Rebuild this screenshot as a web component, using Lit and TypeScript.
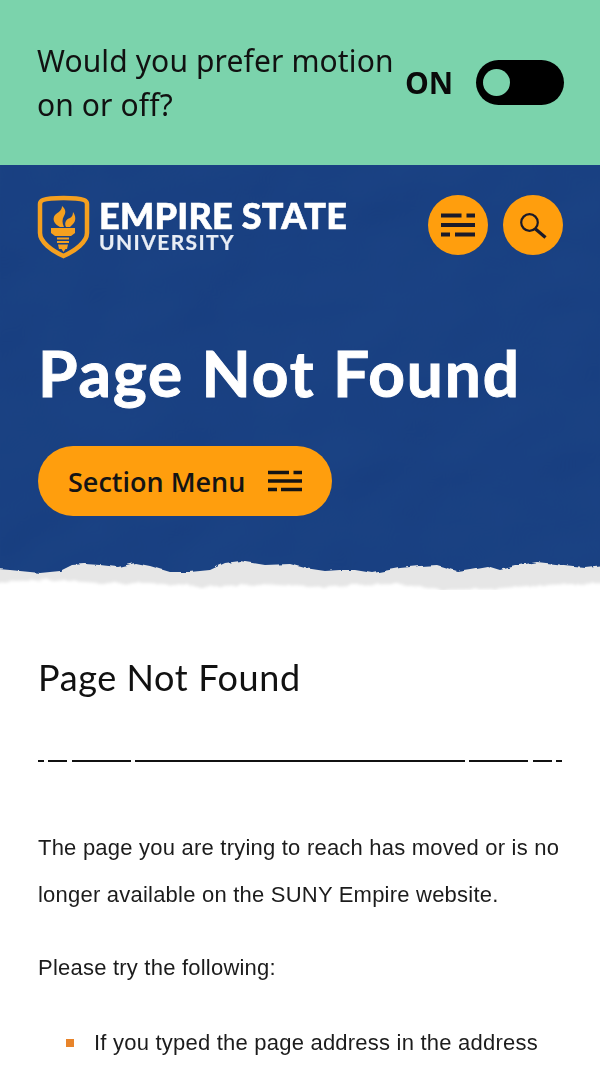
import { LitElement, html, css, svg } from "lit";
import { customElement } from "lit/decorators.js";

const tornTop = "M-12 18 L10 20 L20 21 L40 23 L60 21 L72 15 L85 14 L100 15 L118 17 L135 13 L150 16 L170 22 L190 22 L210 20 L225 13 L240 11 L265 15 L290 14 L305 18 L325 21 L340 20 L355 20 L373 23 L400 18 L420 16 L437 15 L457 21 L470 19 L487 16 L500 20 L520 15 L537 12 L555 14 L573 16 L585 17 L612 14 L612 70 L-12 70 Z";
const tornBottom = "M-12 32 L50 30 L100 33 L150 33 L200 37 L260 34 L310 37 L350 35 L400 34 L440 40 L490 39 L540 35 L612 33 L612 70 L-12 70 Z";

const sliders = () => svg`<svg width="34" height="24" viewBox="0 0 34 24" fill="none" stroke="currentColor" stroke-width="4">
  <path d="M0 2.5H20.5M25.5 2.5H34M0 12H34M0 21.5H9M14 21.5H34"/></svg>`;
const slidersSmall = () => svg`<svg width="34" height="22" viewBox="0 0 34 22" fill="none" stroke="currentColor" stroke-width="3.5">
  <path d="M0 2.5H21M25.5 2.5H34M0 11H34M0 19.5H9M13 19.5H34"/></svg>`;

@customElement("app-root")
export class AppRoot extends LitElement {
  static styles = css`
    :host { display: block; width: 600px; height: 1065px; overflow: hidden; background: #fff; font-family: "Liberation Sans", Arial, sans-serif; color: #1a1a1a; }
    .motion { height: 165px; box-sizing: border-box; background: #7bd3ac; display: flex; align-items: center; padding: 0 36px 0 37px; }
    .motion p { margin: 0; width: 369px; font: 400 30px/44px "Noto Sans", sans-serif; letter-spacing: 0.12px; color: #111; }
    .on { font: 700 30px/1 "Open Sans", sans-serif; color: #0a0a0a; margin-right: 23px; }
    .toggle { width: 88px; height: 45px; background: #000; border-radius: 23px; display: flex; align-items: center; padding-left: 7px; box-sizing: border-box; }
    .knob { width: 27px; height: 27px; border-radius: 50%; background: #7bd3ac; }
    .hero { position: relative; height: 425px; box-sizing: border-box; padding: 30px 37px 0 38px; overflow: hidden; background: #123578; color: #fff; }
    .paper { position: absolute; left: 0; top: 0; width: 600px; height: 425px; display: block; mix-blend-mode: soft-light; opacity: 0.22; }
    .top, h1, .section { position: relative; }
    .top { display: flex; align-items: center; justify-content: space-between; height: 60px; }
    .logo { display: flex; align-items: center; gap: 9px; margin-left: -1px; }
    .shield { margin-top: 3px; }
    .wordmark { display: flex; flex-direction: column; font-family: "Lato", sans-serif; font-weight: 900; color: #fff; -webkit-text-stroke: 0.6px #fff; }
    .w1 { font-size: 36px; line-height: 34px; letter-spacing: 0.25px; }
    .w2 { font-size: 21px; line-height: 20px; font-weight: 700; letter-spacing: 1.4px; color: #e8edf5; -webkit-text-stroke: 0.2px #e8edf5; }
    .btns { display: flex; gap: 15px; }
    .round { width: 60px; height: 60px; border-radius: 50%; background: #ff9e0d; display: flex; align-items: center; justify-content: center; color: #1a1a2a; }
    h1 { margin: 0; padding-top: 80px; font: 700 64px/76px "Lato", sans-serif; color: #fff; letter-spacing: 1.9px; -webkit-text-stroke: 1px #fff; }
    .section { margin-top: 35px; display: flex; align-items: center; justify-content: space-between; box-sizing: border-box; width: 294px; height: 70px; padding: 0 30px; border-radius: 35px; background: #ff9e0d; color: #141414; font: 600 27px/1 "Open Sans", sans-serif; }
    .torn { position: absolute; left: 0; bottom: 0; width: 600px; height: 40px; display: block; }
    .content { padding: 0 38px; }
    h2 { margin: 0; padding-top: 64px; font: 400 36px/46px "Lato", sans-serif; color: #111; letter-spacing: 0.6px; }
    .rule { display: flex; gap: 4.5px; height: 3px; margin: 60px 0 0; }
    .rule i { display: block; height: 2.4px; background: #111; }
    .content p { margin: 0; font-size: 22px; line-height: 47px; letter-spacing: 0.22px; color: #1c1c1c; }
    .p1 { padding-top: 61px; }
    .p2 { padding-top: 26px; }
    ul { list-style: none; margin: 0; padding: 28px 0 0 56px; font-size: 22px; line-height: 47px; letter-spacing: 0.22px; color: #1c1c1c; }
    li { position: relative; }
    li::before { content: ""; position: absolute; left: -28px; top: 20px; width: 8px; height: 8px; background: #e8842a; }
  `;

  render() {
    const segs = [6, 19, 59, 331, 59, 19, 6];
    return html`
      <section class="motion">
        <p>Would you prefer motion on or off?</p>
        <span class="on">ON</span>
        <div class="toggle"><div class="knob"></div></div>
      </section>
      <header class="hero">
        <svg class="paper" viewBox="0 0 600 425">
          <filter id="crumple" x="0" y="0" width="100%" height="100%">
            <feTurbulence type="fractalNoise" baseFrequency="0.005 0.007" numOctaves="3" seed="7" result="n"/>
            <feDiffuseLighting in="n" surfaceScale="14" lighting-color="#fff" diffuseConstant="1">
              <feDistantLight azimuth="40" elevation="55"/>
            </feDiffuseLighting>
          </filter>
          <rect width="600" height="425" filter="url(#crumple)"/>
        </svg>
        <div class="top">
          <div class="logo">
            <svg class="shield" width="53" height="64" viewBox="0 0 53 64">
              <path d="M26.5 3C34 3 42 3.2 47 5C49 5.8 50 7 50 9V38C50 47 38 56 26.5 61C15 56 3 47 3 38V9C3 7 4 5.8 6 5C11 3.2 19 3 26.5 3Z" fill="none" stroke="#f5a01f" stroke-width="4.5"/>
              <path fill="#f5a01f" d="M14 33H38V38L34 41H18L14 38ZM20 42.5H32V44.5H20ZM20 46H32V48H20ZM21 49.5H31L30 54H28.5L26.5 57L24.5 54H22Z"/>
              <path fill="#f5a01f" d="M23 32C17 29 15 24 18 20C21 17 25 16 25 11C29 14 29 18 27 21C25 24 25 28 27 32ZM29 32C27 28 29 24 33 23C35 22 36 20 36 17C39 21 39 26 36 29C35 30 34 31 33 32Z"/>
            </svg>
            <div class="wordmark"><span class="w1">EMPIRE STATE</span><span class="w2">UNIVERSITY</span></div>
          </div>
          <div class="btns">
            <div class="round">${sliders()}</div>
            <div class="round">
              <svg width="28" height="28" viewBox="0 0 28 28" fill="none" stroke="#1a1a2a"><circle cx="10.5" cy="11.5" r="8.3" stroke-width="2.2"/><path d="M16.5 18L26.5 26.5" stroke-width="3.2"/></svg>
            </div>
          </div>
        </div>
        <h1>Page Not Found</h1>
        <div class="section"><span>Section Menu</span>${slidersSmall()}</div>
        <svg class="torn" viewBox="0 0 600 40">
          <filter id="rough" x="-2%" y="-20%" width="104%" height="140%">
            <feTurbulence type="fractalNoise" baseFrequency="0.09" numOctaves="3" seed="3"/>
            <feDisplacementMap in="SourceGraphic" scale="4"/>
            <feGaussianBlur stdDeviation="0.5"/>
          </filter>
          <filter id="fibre" x="-2%" y="-20%" width="104%" height="140%">
            <feTurbulence type="fractalNoise" baseFrequency="0.1" numOctaves="3" seed="5"/>
            <feDisplacementMap in="SourceGraphic" scale="5"/>
            <feGaussianBlur stdDeviation="1.4"/>
          </filter>
          <path d=${tornTop} fill="#e6e6e6" filter="url(#rough)"/>
          <path d=${tornBottom} fill="#fff" filter="url(#fibre)"/>
        </svg>
      </header>
      <main class="content">
        <h2>Page Not Found</h2>
        <div class="rule">${segs.map((w) => html`<i style="width:${w}px"></i>`)}</div>
        <p class="p1">The page you are trying to reach has moved or is no longer available on the SUNY Empire website.</p>
        <p class="p2">Please try the following:</p>
        <ul><li>If you typed the page address in the address</li></ul>
      </main>
    `;
  }
}
